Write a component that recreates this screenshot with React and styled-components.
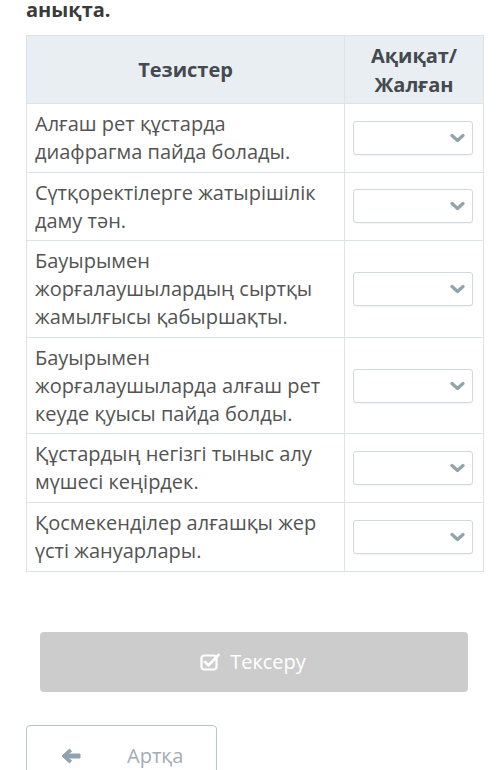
import React from "react";
import styled, { createGlobalStyle } from "styled-components";

const Global = createGlobalStyle`
  html, body { margin: 0; padding: 0; background: #ffffff; }
  body { font-family: "Open Sans", "Noto Sans", sans-serif; }
`;

const Page = styled.div`
  padding: 0 17px 0 26px;
  overflow: hidden;
  height: 770px;
  box-sizing: border-box;
`;

const Title = styled.div`
  font-weight: 700;
  font-size: 20px;
  line-height: 22px;
  margin-top: -1px;
  color: #3a3a3a;
`;

const Table = styled.table`
  margin-top: 14px;
  width: 457px;
  border-collapse: collapse;
  table-layout: fixed;
`;

const HeadCell = styled.th`
  background: #e9eef3;
  border: 1px solid #dde3e7;
  font-weight: 700;
  font-size: 20px;
  line-height: 29px;
  color: #444a4f;
  text-align: center;
  padding: 4px 8px;
  height: 68px;
  box-sizing: border-box;
`;

const Cell = styled.td`
  border: 1px solid #dde3e7;
  font-size: 20px;
  line-height: 28px;
  color: #545454;
  padding: 6px 8px 5.6px 8px;
  vertical-align: middle;
`;

const SelectCell = styled.td`
  border: 1px solid #dde3e7;
  padding: 0 10px 0 8px;
  vertical-align: middle;
`;

const Select = styled.div`
  height: 34px;
  box-sizing: border-box;
  border: 1px solid #d3d8dc;
  border-radius: 3px;
  background: #fff;
  box-shadow: 0 1px 1px rgba(0, 0, 0, 0.04);
  display: flex;
  align-items: center;
  justify-content: flex-end;
  padding-right: 7px;
`;

const Chevron = () => (
  <svg width="15" height="10" viewBox="0 0 15 10">
    <path d="M2 2.5 L7.5 7.5 L13 2.5" fill="none" stroke="#91a4ac" strokeWidth="3.2" strokeLinecap="round" strokeLinejoin="round" />
  </svg>
);

const CheckButton = styled.div`
  margin: 60px 15px 0 14px;
  height: 60px;
  border-radius: 4px;
  background: #cccccc;
  display: flex;
  align-items: center;
  justify-content: center;
  gap: 9px;
  color: #ffffff;
  font-size: 20px;
  padding-right: 2px;
`;

const BackButton = styled.div`
  margin-top: 33px;
  width: 191px;
  height: 62px;
  box-sizing: border-box;
  border: 1px solid #b9c4cb;
  border-radius: 4px;
  background: #fff;
  display: flex;
  align-items: center;
  padding-left: 33px;
  gap: 45px;
  color: #a3adb5;
  font-size: 20px;
`;

const CheckIcon = () => (
  <svg width="21" height="19" viewBox="0 0 21 19">
    <rect x="1.5" y="3.5" width="15" height="14" rx="3" fill="none" stroke="#fff" strokeWidth="2.2" />
    <path d="M5 10 L8.5 13.2 L18.5 3" fill="none" stroke="#fff" strokeWidth="2.8" strokeLinecap="round" strokeLinejoin="round" />
  </svg>
);

const ArrowIcon = () => (
  <svg width="22" height="18" viewBox="0 0 22 18">
    <path d="M2 9 L9.5 2 L11.5 4.5 L8 7 L20 7 L20 11 L8 11 L11.5 13.5 L9.5 16 Z" fill="#8fa3b3" strokeLinejoin="round" stroke="#8fa3b3" strokeWidth="1" />
  </svg>
);

const rows = [
  "Алғаш рет құстарда диафрагма пайда болады.",
  "Сүтқоректілерге жатырішілік даму тән.",
  "Бауырымен жорғалаушылардың сыртқы жамылғысы қабыршақты.",
  "Бауырымен жорғалаушыларда алғаш рет кеуде қуысы пайда болды.",
  "Құстардың негізгі тыныс алу мүшесі кеңірдек.",
  "Қосмекенділер алғашқы жер үсті жануарлары.",
];

export default function App() {
  return (
    <>
      <Global />
      <Page>
        <Title>анықта.</Title>
        <Table>
          <colgroup>
            <col style={{ width: 318 }} />
            <col style={{ width: 139 }} />
          </colgroup>
          <thead>
            <tr>
              <HeadCell>Тезистер</HeadCell>
              <HeadCell>Ақиқат/<br />Жалған</HeadCell>
            </tr>
          </thead>
          <tbody>
            {rows.map((r) => (
              <tr key={r}>
                <Cell>{r}</Cell>
                <SelectCell>
                  <Select>
                    <Chevron />
                  </Select>
                </SelectCell>
              </tr>
            ))}
          </tbody>
        </Table>
        <CheckButton>
          <CheckIcon />
          <span>Тексеру</span>
        </CheckButton>
        <BackButton>
          <ArrowIcon />
          <span>Артқа</span>
        </BackButton>
      </Page>
    </>
  );
}
